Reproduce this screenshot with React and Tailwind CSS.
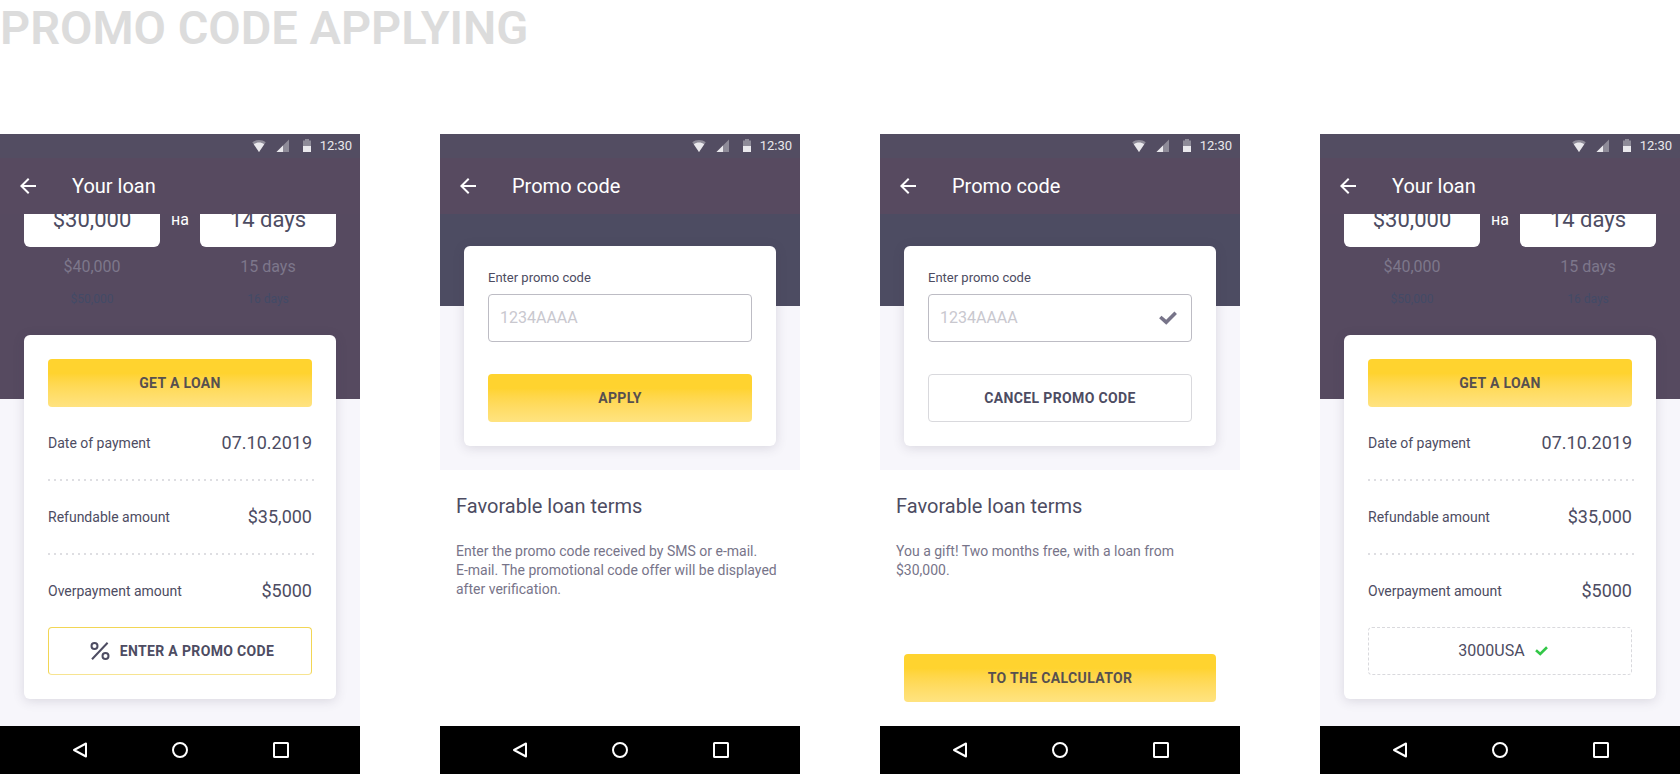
import { useId } from 'react'
import clsx from 'clsx'

function StatusBar() {
  return (
    <div className="flex h-6 items-center justify-end bg-[#534d62] pr-2 text-[#e9e8ec]">
      <svg width="24" height="24" viewBox="0 0 24 24" fill="currentColor" aria-hidden="true">
        <path opacity=".4" d="M12 18 5.3 8.3C9 5.3 15 5.3 18.7 8.3z" />
        <path d="M12 18 6.8 10.2C9.6 7.9 14.4 7.9 17.2 10.2z" />
      </svg>
      <svg width="24" height="24" viewBox="0 0 24 24" fill="currentColor" aria-hidden="true">
        <path opacity=".4" d="M5.5 18 18 5.5V18z" />
        <path d="M5.5 18 12 11.5V18z" />
      </svg>
      <svg width="24" height="24" viewBox="0 0 24 24" fill="currentColor" aria-hidden="true">
        <path opacity=".4" d="M8 6.4h2V5h4v1.400h2V12H8z" />
        <path d="M8 12h8v6H8z" />
      </svg>
      <span className="ml-px text-[13px] leading-4">12:30</span>
    </div>
  )
}

function AppBar({ title }) {
  return (
    <div className="flex h-14 items-center gap-8 bg-[#574a60] px-4 text-white">
      <button type="button" aria-label="Back">
        <svg width="24" height="24" viewBox="0 0 24 24" fill="currentColor" className="block">
          <path d="M20 11H7.830l5.590-5.590L12 4l-8 8 8 8 1.410-1.410L7.830 13H20z" />
        </svg>
      </button>
      <h2 className="text-xl leading-7">{title}</h2>
    </div>
  )
}

function NavBar() {
  const icons = [
    { name: 'Back', shape: <path d="M18 5.500v13L6 12z" /> },
    { name: 'Home', shape: <circle cx="12" cy="12" r="7" /> },
    { name: 'Recent apps', shape: <rect x="6" y="5" width="14" height="14" rx=".5" /> },
  ]

  return (
    <div className="flex h-12 items-center justify-between bg-black px-[68px] text-white">
      {icons.map(({ name, shape }) => (
        <button key={name} type="button" aria-label={name}>
          <svg
            width="24"
            height="24"
            viewBox="0 0 24 24"
            fill="none"
            stroke="currentColor"
            strokeWidth="2"
            strokeLinejoin="round"
            className="block"
          >
            {shape}
          </svg>
        </button>
      ))}
    </div>
  )
}

function Phone({ title, children }) {
  return (
    <article className="flex min-h-[640px] flex-col">
      <StatusBar />
      <AppBar title={title} />
      <div className="flex grow flex-col">{children}</div>
      <NavBar />
    </article>
  )
}

function Card({ className, children }) {
  return (
    <div
      className={clsx(
        'mx-6 flex flex-col rounded-md bg-white p-6 shadow-[0_2px_12px_rgba(60,55,80,0.16)]',
        className
      )}
    >
      {children}
    </div>
  )
}

function YellowButton({ className, children }) {
  return (
    <button
      type="button"
      className={clsx(
        'h-12 rounded bg-linear-to-b from-[#ffd32f] from-30% to-[#ffe380] text-sm font-bold tracking-wide text-[#57504f]',
        className
      )}
    >
      {children}
    </button>
  )
}

function CheckIcon({ className }) {
  return (
    <svg
      viewBox="0 0 18 14"
      fill="none"
      stroke="currentColor"
      strokeWidth="3.6"
      className={className}
      aria-hidden="true"
    >
      <path d="M1.300 6 7.200 11.200 16.700 1.800" />
    </svg>
  )
}

function PercentIcon() {
  return (
    <svg width="20" height="20" viewBox="0 0 20 20" fill="none" stroke="currentColor" strokeWidth="2" aria-hidden="true">
      <circle cx="4.5" cy="5" r="3" />
      <circle cx="15.500" cy="15" r="3" />
      <path d="M2 18.300 17.600 1.700" />
    </svg>
  )
}

// The picker is scrolled: the selected value is cut off by the app bar
function Wheel({ values }) {
  const [selected, next, last] = values
  return (
    <ul className="flex grow basis-0 flex-col text-center">
      <li className="flex h-[55px] items-center justify-center rounded-md bg-white text-[22px] text-[#4d4c62]">
        {selected}
      </li>
      <li className="text-base leading-10 text-[#7d778b]">{next}</li>
      <li className="text-xs leading-6 text-[#434a67]">{last}</li>
    </ul>
  )
}

function LoanScreen({ children }) {
  const rows = [
    ['Date of payment', '07.10.2019'],
    ['Refundable amount', '$35,000'],
    ['Overpayment amount', '$5000'],
  ]

  return (
    <Phone title="Your loan">
      <div className="flex h-[185px] overflow-hidden bg-[#564a60] px-6">
        <div className="-mt-[22px] flex grow items-start">
          <Wheel values={['$30,000', '$40,000', '$50,000']} />
          <span className="w-10 text-center text-base leading-[55px] text-white">на</span>
          <Wheel values={['14 days', '15 days', '16 days']} />
        </div>
      </div>
      <div className="grow bg-[#f7f6fb] pb-6">
        <Card className="-mt-16">
          <YellowButton>GET A LOAN</YellowButton>
          <dl className="text-[#4d4c62]">
            {rows.map(([label, value], i) => (
              <div key={label}>
                {i > 0 && (
                  <div className="-mr-0.5 h-0.5 bg-[repeating-linear-gradient(to_right,#dedee2_0_2px,transparent_2px_6px)]" />
                )}
                <div className="flex h-18 items-center justify-between">
                  <dt className="text-sm">{label}</dt>
                  <dd className="text-lg">{value}</dd>
                </div>
              </div>
            ))}
          </dl>
          {children}
        </Card>
      </div>
    </Phone>
  )
}

function PromoScreen({ applied, action, text, footer }) {
  const id = useId()

  return (
    <Phone title="Promo code">
      <div className="h-[92px] bg-[#4d4c62]" />
      <div className="bg-[#f7f6fb] pb-6">
        <Card className="-mt-[60px]">
          <label htmlFor={id} className="text-[13px] leading-4 text-[#4d4c62]">
            Enter promo code
          </label>
          <div className="mt-2 mb-8 flex h-12 items-center rounded border border-[#bdbcc4] pr-[14px] pl-[11px]">
            <input
              id={id}
              type="text"
              placeholder="1234AAAA"
              className="w-0 grow text-base text-[#4d4c62] outline-none placeholder:text-[#c9c8cf]"
            />
            {applied && <CheckIcon className="h-[14px] w-[18px] text-[#777489]" />}
          </div>
          {action}
        </Card>
      </div>
      <section className="px-4 pt-[22px]">
        <h3 className="text-xl leading-7 text-[#4d4c62]">Favorable loan terms</h3>
        <p className="mt-[22px] text-sm leading-[19px] text-[#777489]">{text}</p>
      </section>
      {footer}
    </Phone>
  )
}

export default function App() {
  return (
    <main className="bg-white font-[Roboto,sans-serif]">
      <h1 className="h-[134px] text-[47px] leading-14 font-semibold text-[#dcdcdc]">PROMO CODE APPLYING</h1>

      <div className="grid grid-cols-4 gap-20">
        <LoanScreen>
          <button
            type="button"
            className="flex h-12 items-center justify-center gap-2.5 rounded border border-[#f2d655] border-b-[#f7e491] pl-1 text-sm font-bold tracking-wide text-[#4d4c62]"
          >
            <PercentIcon />
            ENTER A PROMO CODE
          </button>
        </LoanScreen>

        <PromoScreen
          action={<YellowButton>APPLY</YellowButton>}
          text={
            <>
              Enter the promo code received by SMS or e-mail.
              <br />
              E-mail. The promotional code offer will be displayed after verification.
            </>
          }
        />

        <PromoScreen
          applied
          action={
            <button
              type="button"
              className="h-12 rounded border border-[#d9d9dd] text-sm font-bold tracking-wide text-[#4d4c62]"
            >
              CANCEL PROMO CODE
            </button>
          }
          text="You a gift! Two months free, with a loan from $30,000."
          footer={<YellowButton className="mx-6 mt-auto mb-6">TO THE CALCULATOR</YellowButton>}
        />

        <LoanScreen>
          <div className="flex h-12 items-center justify-center gap-2.5 rounded border border-dashed border-[#d9d9dd] pl-1.5 text-base text-[#4d4c62]">
            3000USA
            <CheckIcon className="h-[10px] w-[13px] text-[#33c748]" />
          </div>
        </LoanScreen>
      </div>
    </main>
  )
}
